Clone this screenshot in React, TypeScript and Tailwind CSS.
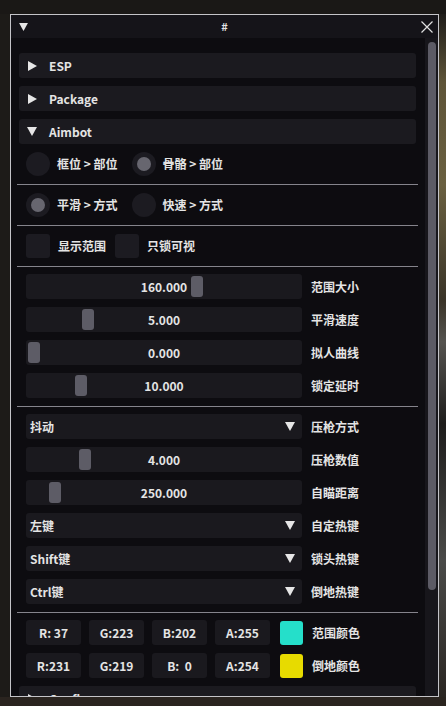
import React from "react";

const font = "font-['Noto_Sans_CJK_SC','Noto_Sans',sans-serif]";

function TriRight() {
  return (
    <svg width="9" height="10" viewBox="0 0 9 10" className="shrink-0">
      <polygon points="0,0 9,5 0,10" fill="#e6e6e6" />
    </svg>
  );
}

function TriDown({ size = 9 }: { size?: number }) {
  return (
    <svg width={size} height={size - 1} viewBox="0 0 10 9" className="shrink-0">
      <polygon points="0,0 10,0 5,9" fill="#e6e6e6" />
    </svg>
  );
}

function Header({ label, open }: { label: string; open?: boolean }) {
  return (
    <div className="mx-[2px] flex h-[25px] shrink-0 items-center rounded-[3px] bg-[#1b1a1f] pl-[8px]">
      <span className="flex w-[10px] justify-center">{open ? <TriDown size={10} /> : <TriRight />}</span>
      <span className="ml-[12px]">{label}</span>
    </div>
  );
}

function Separator({ tight }: { tight?: boolean }) {
  return <div className={`h-px shrink-0 bg-[#85848c] ${tight ? "-mb-px" : ""}`} />;
}

function Radio({ label, on }: { label: string; on?: boolean }) {
  return (
    <div className="flex items-center">
      <span className="flex size-[24px] items-center justify-center rounded-full bg-[#1c1b21]">
        {on && <span className="size-[14px] rounded-full bg-[#67666f]" />}
      </span>
      <span className="ml-[7px] whitespace-pre">{label}</span>
    </div>
  );
}

function Check({ label }: { label: string }) {
  return (
    <div className="flex items-center">
      <span className="size-[24px] rounded-[3px] bg-[#1c1b21]" />
      <span className="ml-[8px]">{label}</span>
    </div>
  );
}

function Row({ label, children }: { label: string; children: React.ReactNode }) {
  return (
    <div className="flex h-[25px] shrink-0 items-center pl-[9px]">
      {children}
      <span className="ml-[9px]">{label}</span>
    </div>
  );
}

function Slider({ value, grab, label }: { value: string; grab: number; label: string }) {
  return (
    <Row label={label}>
      <div className="relative flex h-[25px] w-[276px] items-center justify-center rounded-[3px] bg-[#1a191e]">
        <span className="absolute top-[2px] h-[21px] w-[12px] rounded-[3px] bg-[#5d5c66]" style={{ left: grab }} />
        <span className="relative">{value}</span>
      </div>
    </Row>
  );
}

function Combo({ value, label }: { value: string; label: string }) {
  return (
    <Row label={label}>
      <div className="flex h-[25px] w-[276px] items-center justify-between rounded-[3px] bg-[#1a191e] pl-[4px] pr-[7px]">
        <span>{value}</span>
        <TriDown size={10} />
      </div>
    </Row>
  );
}

function ColorRow({ rgba, color, label }: { rgba: string[]; color: string; label: string }) {
  return (
    <Row label={label}>
      <div className="flex items-center gap-[8px]">
        {rgba.map((t) => (
          <span
            key={t}
            className="flex h-[25px] w-[55px] items-center justify-center whitespace-pre rounded-[3px] bg-[#1a191e]"
          >
            {t}
          </span>
        ))}
        <span className={`ml-[2px] h-[24px] w-[23px] rounded-[3px] ${color}`} />
      </div>
    </Row>
  );
}

export default function App() {
  return (
    <div
      className={`flex h-[706px] w-[446px] flex-col overflow-hidden bg-[#1c1a17] text-[12px] font-bold text-[#e4e4e4] ${font}`}
    >
      <div className="h-[14px] shrink-0 bg-[#1a1816]" />
      <div className="flex shrink-0">
        <div className="w-[10px] shrink-0 bg-[#1d1b18]" />
        <div className="flex h-[683px] w-[429px] shrink-0 flex-col border border-[#c4c4c8] bg-[#0d0c10]">
          <div className="relative flex h-[23px] shrink-0 items-center justify-center bg-[#151419]">
            <span className="absolute left-[8px] top-[8px]">
              <TriDown size={9} />
            </span>
            <span className="text-[11px]">#</span>
            <svg className="absolute right-[5px] top-[6px]" width="12" height="12" viewBox="0 0 12 12">
              <path d="M0.5 0.5 L11.5 11.5 M11.5 0.5 L0.5 11.5" stroke="#e0e0e0" strokeWidth="1.2" />
            </svg>
          </div>
          <div className="flex min-h-0 flex-1">
            <div className="flex min-w-0 flex-1 flex-col gap-[8px] overflow-hidden pl-[6px] pr-[7px] pt-[15px]">
              <Header label="ESP" />
              <Header label="Package" />
              <Header label="Aimbot" open />
              <div className="flex h-[24px] shrink-0 items-center gap-[14px] pl-[9px]">
                <Radio label="框位 > 部位" />
                <Radio label="骨骼 > 部位" on />
              </div>
              <Separator />
              <div className="flex h-[24px] shrink-0 items-center gap-[14px] pl-[9px]">
                <Radio label="平滑 > 方式" on />
                <Radio label="快速 > 方式" />
              </div>
              <Separator />
              <div className="flex h-[24px] shrink-0 items-center gap-[9px] pl-[9px]">
                <Check label="显示范围" />
                <Check label="只锁可视" />
              </div>
              <Separator tight />
              <Slider value="160.000" grab={165} label="范围大小" />
              <Slider value="5.000" grab={56} label="平滑速度" />
              <Slider value="0.000" grab={2} label="拟人曲线" />
              <Slider value="10.000" grab={49} label="锁定延时" />
              <Separator tight />
              <Combo value="抖动" label="压枪方式" />
              <Slider value="4.000" grab={53} label="压枪数值" />
              <Slider value="250.000" grab={23} label="自瞄距离" />
              <Combo value="左键" label="自定热键" />
              <Combo value="Shift键" label="锁头热键" />
              <Combo value="Ctrl键" label="倒地热键" />
              <Separator tight />
              <ColorRow rgba={["R: 37", "G:223", "B:202", "A:255"]} color="bg-[#25dfca]" label="范围颜色" />
              <ColorRow rgba={["R:231", "G:219", "B:  0", "A:254"]} color="bg-[#e7db00]" label="倒地颜色" />
              <Header label="Config" />
            </div>
            <div className="w-[13px] shrink-0 bg-[#17161b] pl-[3px] pt-[4px]">
              <div className="h-[548px] w-[8px] rounded-full bg-[#5c5b65]" />
            </div>
          </div>
        </div>
        <div className="flex-1 bg-[linear-gradient(180deg,#1f1d1a_0%,#5e5438_10%,#6a6040_25%,#3a3428_42%,#55534f_48%,#1e1d1c_60%,#4a4a48_80%,#2a2622_100%)]" />
      </div>
      <div className="flex-1 bg-[#2a241f]" />
    </div>
  );
}
